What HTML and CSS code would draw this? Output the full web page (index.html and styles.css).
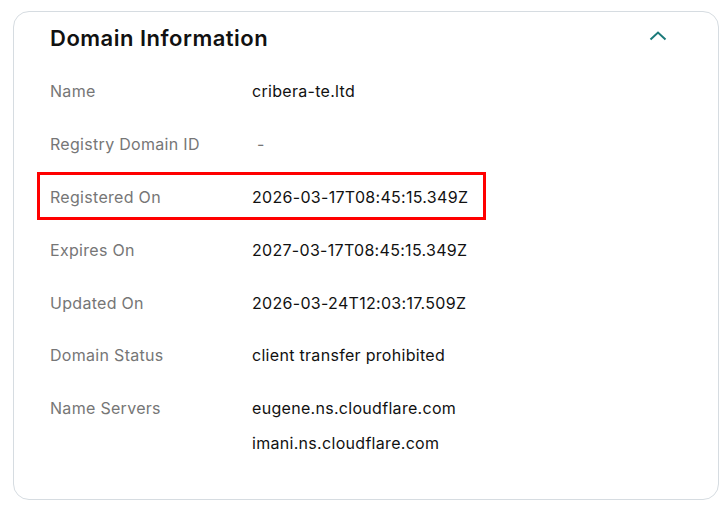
FILE: index.html
```html
<!DOCTYPE html>
<html>
<head>
<meta charset="utf-8">
<link rel="stylesheet" href="styles.css">
</head>
<body>
<section class="card">
  <header class="card-header">
    <h2 class="title">Domain Information</h2>
    <button class="toggle" aria-label="Collapse">
      <svg width="18" height="10" viewBox="0 0 18 10"><path d="M1.5 8.5 L9 1.5 L16.5 8.5" fill="none" stroke="#1b7a7a" stroke-width="2"/></svg>
    </button>
  </header>
  <div class="rows">
    <div class="row"><div class="label">Name</div><div class="value">cribera-te.ltd</div></div>
    <div class="row"><div class="label">Registry Domain ID</div><div class="value dash">-</div></div>
    <div class="row highlighted"><div class="label">Registered On</div><div class="value">2026-03-17T08:45:15.349Z</div><span class="highlight"></span></div>
    <div class="row"><div class="label">Expires On</div><div class="value">2027-03-17T08:45:15.349Z</div></div>
    <div class="row short"><div class="label">Updated On</div><div class="value">2026-03-24T12:03:17.509Z</div></div>
    <div class="row"><div class="label">Domain Status</div><div class="value">client transfer prohibited</div></div>
    <div class="row servers"><div class="label">Name Servers</div><div class="value list"><span>eugene.ns.cloudflare.com</span><span>imani.ns.cloudflare.com</span></div></div>
  </div>
</section>
</body>
</html>
```
FILE: styles.css
```css
html, body {
  margin: 0;
  padding: 0;
  background: #ffffff;
}
body {
  font-family: "Inter", "Liberation Sans", sans-serif;
  color: #111111;
  padding: 11px 9px 0 13px;
}
.card {
  width: 706px;
  height: 489px;
  border: 1px solid #d6dce1;
  border-radius: 16px;
  padding: 0 0 0 36px;
  box-sizing: border-box;
}
.card-header {
  height: 54px;
  display: flex;
  align-items: center;
  justify-content: space-between;
  padding-right: 51px;
}
.title {
  margin: -2px 0 0 0;
  font-size: 22px;
  font-weight: 600;
  letter-spacing: 0.5px;
  color: #111111;
}
.toggle {
  border: 0;
  background: none;
  padding: 0;
  display: flex;
  margin-top: -7px;
}
.rows {
  display: flex;
  flex-direction: column;
}
.row {
  position: relative;
  display: grid;
  grid-template-columns: 203px 1fr;
  align-items: start;
  height: 53px;
  padding-top: 13px;
  box-sizing: border-box;
  font-size: 16px;
  line-height: 24px;
  letter-spacing: 0.3px;
}
.row.short {
  height: 52px;
}
.label {
  color: #767676;
}
.value {
  color: #111111;
  margin-left: -1px;
}
.dash {
  color: #767676;
  padding-left: 5px;
}
.list {
  display: flex;
  flex-direction: column;
  gap: 11px;
}
.servers {
  height: auto;
}
.highlight {
  position: absolute;
  left: -13px;
  top: 0;
  width: 449px;
  height: 48px;
  border: 3px solid #ff0000;
  box-sizing: border-box;
  pointer-events: none;
}
```
